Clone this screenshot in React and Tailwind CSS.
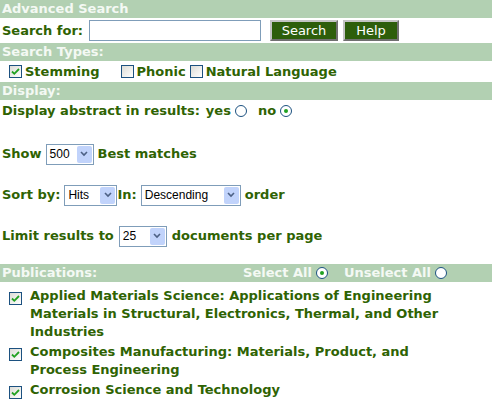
const font = { fontFamily: '"DejaVu Sans", Verdana, sans-serif' }

function Bar({ children, right }) {
  return (
    <div className="flex h-[18px] items-center bg-[#b2d0b2] pl-[2px] text-[13px] font-bold text-[#f4f9f4]">
      <span>{children}</span>
      {right}
    </div>
  )
}

function Check({ on }) {
  return (
    <span className="mr-[3px] inline-flex h-[13px] w-[13px] shrink-0 items-center justify-center border border-[#1c5180] bg-gradient-to-br from-[#dcdcd6] to-white">
      {on && (
        <svg width="9" height="9" viewBox="0 0 9 9">
          <path d="M1 4.5l2.3 2.3L8 2" stroke="#21a121" strokeWidth="1.8" fill="none" />
        </svg>
      )}
    </span>
  )
}

function Radio({ on }) {
  return (
    <span className="inline-flex h-[12px] w-[12px] items-center justify-center rounded-full border border-[#1c5180] bg-white">
      {on && <span className="h-[4px] w-[4px] rounded-full bg-[#21a121]" />}
    </span>
  )
}

function Select({ value, w }) {
  return (
    <span className={`inline-flex h-[21px] items-center border border-[#7f9db9] bg-white ${w}`}>
      <span className="flex-1 pl-[3px] text-[12px] font-normal text-black" style={{ fontFamily: '"Liberation Sans", Arial, sans-serif' }}>{value}</span>
      <span className="mr-[1px] flex h-[17px] w-[15px] items-center justify-center rounded-[2px] bg-[#c1d3fb]">
        <svg width="8" height="6" viewBox="0 0 8 6"><path d="M1 1l3 3 3-3" stroke="#4d6185" strokeWidth="1.6" fill="none" /></svg>
      </span>
    </span>
  )
}

const pubs = [
  'Applied Materials Science: Applications of Engineering Materials in Structural, Electronics, Thermal, and Other Industries',
  'Composites Manufacturing: Materials, Product, and Process Engineering',
  'Corrosion Science and Technology',
]

export default function App() {
  return (
    <div className="h-[403px] w-[492px] overflow-hidden bg-white text-[13px] font-bold text-[#2f6303]" style={font}>
      <Bar>Advanced Search</Bar>
      <div className="flex h-[25px] items-center">
        <span className="ml-[2px] w-[87px]">Search for:</span>
        <span className="h-[21px] w-[172px] border border-[#7f9db9] bg-white" />
        <span className="ml-[9px] flex h-[21px] w-[68px] items-center justify-center border-2 border-[#c4c4c4] bg-[#2d5e0b] text-[13px] font-normal text-white" style={{ borderStyle: 'outset' }}>Search</span>
        <span className="ml-[5px] flex h-[21px] w-[56px] items-center justify-center border-2 border-[#c4c4c4] bg-[#2d5e0b] text-[13px] font-normal text-white" style={{ borderStyle: 'outset' }}>Help</span>
      </div>
      <Bar>Search Types:</Bar>
      <div className="flex h-[21px] items-center pl-[9px]">
        <Check on />
        <span className="mr-[21px]">Stemming</span>
        <Check />
        <span className="mr-[4px]">Phonic</span>
        <Check />
        <span>Natural Language</span>
      </div>
      <Bar>Display:</Bar>
      <div className="flex h-[21px] items-center gap-[4px] pl-[2px]">
        <span>Display abstract in results:</span>
        <span className="ml-[2px]">yes</span>
        <Radio />
        <span className="ml-[7px]">no</span>
        <Radio on />
      </div>
      <div className="mt-[22px] flex h-[22px] items-center gap-[4px] pl-[2px]">
        <span>Show</span>
        <Select value="500" w="w-[48px]" />
        <span>Best matches</span>
      </div>
      <div className="mt-[19px] flex h-[22px] items-center pl-[2px]">
        <span className="mr-[4px]">Sort by:</span>
        <Select value="Hits" w="w-[53px]" />
        <span className="mr-[4px]">In:</span>
        <Select value="Descending" w="w-[100px]" />
        <span className="ml-[4px]">order</span>
      </div>
      <div className="mt-[19px] flex h-[22px] items-center gap-[5px] pl-[2px]">
        <span>Limit results to</span>
        <Select value="25" w="w-[48px]" />
        <span>documents per page</span>
      </div>
      <div className="mt-[17px]">
        <Bar
          right={
            <span className="ml-auto mr-[45px] flex items-center gap-[4px] font-bold">
              Select All <Radio on /> <span className="ml-[12px]">Unselect All</span> <Radio />
            </span>
          }
        >
          Publications:
        </Bar>
      </div>
      <div className="mt-[5px] flex flex-col gap-[2px] pl-[9px] pr-[50px]">
        {pubs.map((p, i) => (
          <div key={i} className="flex items-start">
            <span className="mt-[2px] mr-[5px]"><Check on /></span>
            <span className="leading-[18px]">{p}</span>
          </div>
        ))}
      </div>
    </div>
  )
}
